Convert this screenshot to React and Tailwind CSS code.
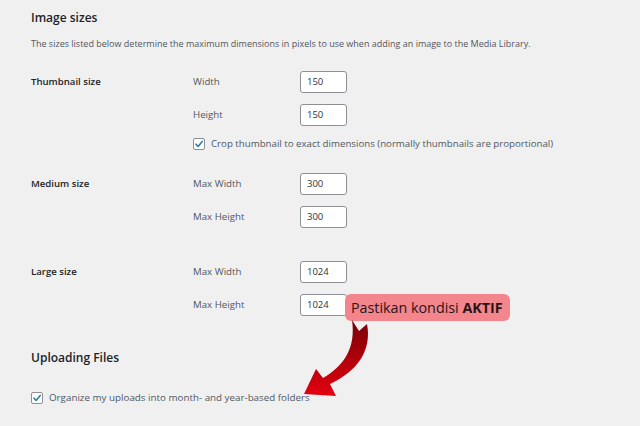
import React from "react";

const CheckBox = () => (
  <span className="flex h-[12px] w-[12px] shrink-0 items-center justify-center rounded-[2px] border border-[#8c8f94] bg-white">
    <svg width="10" height="10" viewBox="0 0 10 10">
      <path d="M2 5.2 L4.1 7.4 L8.2 2.4" fill="none" stroke="#2c7fa8" strokeWidth="1.6" strokeLinecap="round" strokeLinejoin="round" />
    </svg>
  </span>
);

const SizeInput = ({ value }) => (
  <div className="flex h-[22px] w-[47px] items-center rounded-[3px] border border-[#8c8f94] bg-white pl-[6px] text-[9.5px] text-[#2c3338]">
    {value}
  </div>
);

const FieldRow = ({ label, value }) => (
  <div className="flex h-[22px] items-center">
    <span className="w-[107px] text-[9.7px] text-[#50575e]">{label}</span>
    <SizeInput value={value} />
  </div>
);

const SizeGroup = ({ title, rows, children, className }) => (
  <div className={"flex " + (className || "")}>
    <div className="w-[162px] text-[9.6px] font-semibold leading-[22px] text-[#1d2327]">{title}</div>
    <div className="flex flex-col gap-[11px]">
      {rows.map((r) => (
        <FieldRow key={r.label} label={r.label} value={r.value} />
      ))}
      {children}
    </div>
  </div>
);

export default function App() {
  return (
    <div
      className="relative h-[426px] w-[640px] overflow-hidden bg-[#f0f0f1] pl-[31px] pt-[8px]"
      style={{ fontFamily: '"Open Sans", "Noto Sans", sans-serif' }}
    >
      <h2 className="text-[12px] font-semibold leading-[20px] text-[#1d2327]">Image sizes</h2>
      <p className="mt-[9px] text-[9px] leading-[14px] text-[#50575e]">
        The sizes listed below determine the maximum dimensions in pixels to use when adding an image to the Media Library.
      </p>

      <SizeGroup
        className="mt-[20px]"
        title="Thumbnail size"
        rows={[
          { label: "Width", value: "150" },
          { label: "Height", value: "150" },
        ]}
      >
        <div className="mt-px flex items-center gap-[6px]">
          <CheckBox />
          <span className="text-[9.7px] leading-[12px] text-[#50575e]">
            Crop thumbnail to exact dimensions (normally thumbnails are proportional)
          </span>
        </div>
      </SizeGroup>

      <SizeGroup
        className="mt-[23px]"
        title="Medium size"
        rows={[
          { label: "Max Width", value: "300" },
          { label: "Max Height", value: "300" },
        ]}
      />

      <SizeGroup
        className="mt-[33px]"
        title="Large size"
        rows={[
          { label: "Max Width", value: "1024" },
          { label: "Max Height", value: "1024" },
        ]}
      />

      <h2 className="mt-[33px] text-[12px] font-semibold leading-[18px] text-[#1d2327]">Uploading Files</h2>
      <div className="mt-[25px] flex items-center gap-[6px]">
        <CheckBox />
        <span className="text-[9.8px] leading-[12px] text-[#50575e]">
          Organize my uploads into month- and year-based folders
        </span>
      </div>

      {/* callout note */}
      <div className="absolute left-[345px] top-[294px] flex h-[27px] w-[165px] items-center rounded-[6px] bg-[#f3868d] pl-[6px] text-[14.3px] text-[#2a1416]">
        Pastikan kondisi&nbsp;<b className="font-bold">AKTIF</b>
      </div>

      {/* curved arrow pointing to the checkbox */}
      <svg className="absolute left-0 top-0" width="640" height="426" viewBox="0 0 640 426">
        <defs>
          <linearGradient id="arrowFill" x1="0" y1="0" x2="0" y2="1">
            <stop offset="0" stopColor="#7a0008" />
            <stop offset="1" stopColor="#e3000f" />
          </linearGradient>
        </defs>
        <path
          d="M352 320 L359 331 L367 324 C372 350 358 371 330 384 L336 396 L304 394 L316 369 L323 378 C344 366 356 348 352 320 Z"
          fill="url(#arrowFill)"
        />
      </svg>
    </div>
  );
}
